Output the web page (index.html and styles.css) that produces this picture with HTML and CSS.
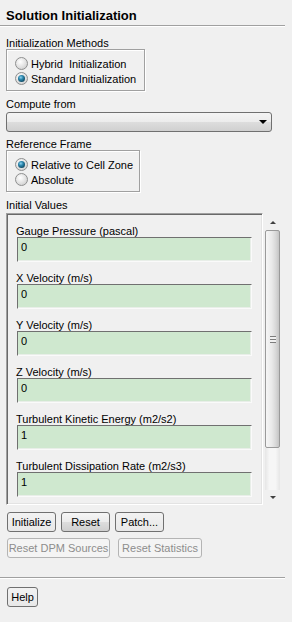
FILE: index.html
```html
<!DOCTYPE html>
<html lang="en">
<head>
  <meta charset="UTF-8">
  <title>Solution Initialization</title>
  <link rel="stylesheet" href="styles.css">
</head>
<body>
  <div class="title">Solution Initialization</div>

  <div class="content">
    <div class="label first">Initialization Methods</div>
    <div class="group group-methods">
      <div class="opt"><span class="radio"></span>Hybrid&nbsp; Initialization</div>
      <div class="opt"><span class="radio on"></span>Standard Initialization</div>
    </div>

    <div class="label">Compute from</div>
    <div class="combo"><span class="combo-arrow"></span></div>

    <div class="label label-frame">Reference Frame</div>
    <div class="group group-frame">
      <div class="opt"><span class="radio on"></span>Relative to Cell Zone</div>
      <div class="opt"><span class="radio"></span>Absolute</div>
    </div>

    <div class="label">Initial Values</div>
    <div class="values">
      <div class="panel">
        <div class="field">
          <div class="field-label">Gauge Pressure (pascal)</div>
          <input class="entry" type="text" value="0">
        </div>
        <div class="field">
          <div class="field-label">X Velocity (m/s)</div>
          <input class="entry" type="text" value="0">
        </div>
        <div class="field">
          <div class="field-label">Y Velocity (m/s)</div>
          <input class="entry" type="text" value="0">
        </div>
        <div class="field">
          <div class="field-label">Z Velocity (m/s)</div>
          <input class="entry" type="text" value="0">
        </div>
        <div class="field">
          <div class="field-label">Turbulent Kinetic Energy (m2/s2)</div>
          <input class="entry" type="text" value="1">
        </div>
        <div class="field">
          <div class="field-label">Turbulent Dissipation Rate (m2/s3)</div>
          <input class="entry" type="text" value="1">
        </div>
      </div>
      <div class="scrollbar">
        <div class="sb-btn"><span class="arrow-up"></span></div>
        <div class="sb-thumb"><span class="grip"></span></div>
        <div class="sb-track"></div>
        <div class="sb-btn"><span class="arrow-down"></span></div>
      </div>
    </div>

    <div class="buttons">
      <button class="btn w49">Initialize</button>
      <button class="btn btn-raised w49">Reset</button>
      <button class="btn w49">Patch...</button>
    </div>
    <div class="buttons buttons-wide">
      <button class="btn w103" disabled>Reset DPM Sources</button>
      <button class="btn w84" disabled>Reset Statistics</button>
    </div>
  </div>

  <div class="separator"></div>

  <div class="content">
    <button class="btn help">Help</button>
  </div>
</body>
</html>
```

FILE: styles.css
```css
body {
  margin: 0;
  width: 292px;
  background-color: #f0f0f0;
  font-family: "Liberation Sans", Arial, sans-serif;
  font-size: 11px;
  color: #000;
}

.title {
  margin-right: 7px;
  padding: 8px 0 1px 6px;
  font-size: 13px;
  font-weight: bold;
  line-height: 16px;
  border-bottom: 1px solid #a0a0a0;
  box-shadow: 0 1px 0 #fff;
}

.content {
  padding: 0 6px;
}

.label {
  height: 12px;
  line-height: 12px;
  margin-top: 7px;
  white-space: nowrap;
}

.label.first {
  margin-top: 11px;
}

.label.label-frame {
  margin-top: 6px;
}

/* radio groups */
.group {
  box-sizing: border-box;
  height: 42px;
  padding: 6px 10px 4px 8px;
  border: 1px solid #a0a0a0;
  box-shadow: inset 1px 1px 0 #fff, 1px 1px 0 #fff;
}

.group-methods {
  width: 139px;
}

.group-frame {
  width: 134px;
}

.opt {
  display: flex;
  align-items: center;
  gap: 3px;
  height: 15px;
  white-space: nowrap;
}

.radio {
  box-sizing: border-box;
  display: flex;
  align-items: center;
  justify-content: center;
  flex: none;
  width: 13px;
  height: 13px;
  border: 1px solid #8e8f8f;
  border-radius: 50%;
  background: radial-gradient(circle at 40% 35%, #ffffff 0%, #e6e6e6 45%, #c6c6c6 100%);
}

.radio.on::after {
  content: "";
  width: 7px;
  height: 7px;
  border-radius: 50%;
  background: radial-gradient(circle at 40% 35%, #8fd3ef 0%, #2b86ad 35%, #114a63 75%, #0b3346 100%);
}

/* combo box */
.combo {
  box-sizing: border-box;
  display: flex;
  align-items: center;
  justify-content: flex-end;
  width: 266px;
  height: 20px;
  margin-top: 2px;
  padding-right: 4px;
  border: 1px solid #707070;
  border-radius: 3px;
  background: linear-gradient(#f4f4f4 0%, #ececec 50%, #dddddd 50%, #d0d0d0 100%);
}

.combo-arrow {
  width: 0;
  height: 0;
  border-left: 4px solid transparent;
  border-right: 4px solid transparent;
  border-top: 4px solid #000;
}

/* initial values */
.values {
  display: flex;
  align-items: flex-start;
  margin-top: 2px;
}

.panel {
  box-sizing: border-box;
  width: 257px;
  padding: 11px 0 7px 9px;
  border: 1px solid;
  border-color: #a0a0a0 #ffffff #ffffff #a0a0a0;
  box-shadow: inset 1px 1px 0 #696969, inset -1px -1px 0 #e3e3e3;
}

.field + .field {
  margin-top: 10px;
}

.field-label {
  height: 12px;
  line-height: 12px;
  white-space: nowrap;
}

.entry {
  display: block;
  box-sizing: border-box;
  width: 235px;
  height: 25px;
  margin: 0 0 0 1px;
  padding: 1px 3px 6px;
  border: 1px solid;
  border-color: #707070 #fafafa #fafafa #707070;
  box-shadow: inset -1px -1px 0 #e8eee8;
  background-color: #cfe8cf;
  font-family: inherit;
  font-size: 11px;
  color: #000;
}

.scrollbar {
  display: flex;
  flex-direction: column;
  width: 15px;
  height: 290px;
  margin: 2px 0 0 2px;
}

.sb-btn {
  display: flex;
  align-items: center;
  justify-content: center;
  height: 15px;
}

.arrow-up {
  width: 0;
  height: 0;
  border-left: 3px solid transparent;
  border-right: 3px solid transparent;
  border-bottom: 3px solid #404040;
}

.arrow-down {
  width: 0;
  height: 0;
  border-left: 3px solid transparent;
  border-right: 3px solid transparent;
  border-top: 3px solid #404040;
}

.sb-thumb {
  box-sizing: border-box;
  display: flex;
  align-items: center;
  justify-content: center;
  height: 218px;
  border: 1px solid #9a9a9a;
  border-radius: 2px;
  background: linear-gradient(to right, #f6f6f6 0%, #e9e9e9 45%, #d8d8d8 75%, #c4c4c4 100%);
}

.grip {
  width: 6px;
  height: 5px;
  border-top: 1px solid #7c7c7c;
  border-bottom: 1px solid #7c7c7c;
  background: linear-gradient(#f0f0f0 0, #f0f0f0 2px, #7c7c7c 2px, #7c7c7c 3px, #f0f0f0 3px);
}

.sb-track {
  flex: 1;
  background: linear-gradient(to right, #e6e6e6, #f6f6f6 30%, #f6f6f6 70%, #e6e6e6);
}

/* buttons */
.buttons {
  display: flex;
  gap: 5px;
  margin-top: 7px;
  padding-left: 1px;
}

.buttons-wide {
  gap: 8px;
  margin-top: 6px;
}

.btn {
  box-sizing: border-box;
  height: 20px;
  padding: 0;
  border: 1px solid #707070;
  border-radius: 3px;
  background: linear-gradient(#f2f2f2, #e8e8e8);
  font-family: inherit;
  font-size: 11px;
  color: #000;
  white-space: nowrap;
}

.btn-raised {
  background: linear-gradient(#f6f6f6 0%, #ebebeb 50%, #dddddd 50%, #cfcfcf 100%);
}

.btn:disabled {
  border-color: #b4b4b4;
  background: #f4f4f4;
  color: #8d8d8d;
}

.w49 {
  width: 49px;
}

.w103 {
  width: 103px;
}

.w84 {
  width: 84px;
}

.separator {
  width: 285px;
  margin-top: 19px;
  border-top: 1px solid #a0a0a0;
  border-bottom: 1px solid #fff;
}

.help {
  width: 31px;
  margin: 8px 0 0 1px;
}
```
